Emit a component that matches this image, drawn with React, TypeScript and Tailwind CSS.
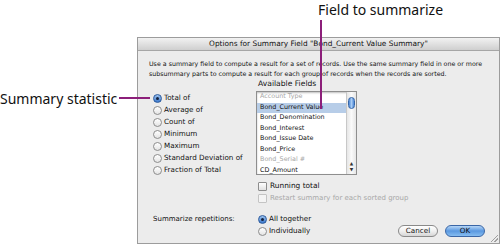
const statistics = [
  'Total of',
  'Average of',
  'Count of',
  'Minimum',
  'Maximum',
  'Standard Deviation of',
  'Fraction of Total',
];

const fields = [
  { name: 'Account Type', disabled: true },
  { name: 'Bond_Current Value', selected: true },
  { name: 'Bond_Denomination' },
  { name: 'Bond_Interest' },
  { name: 'Bond_Issue Date' },
  { name: 'Bond_Price' },
  { name: 'Bond_Serial #', disabled: true },
  { name: 'CD_Amount' },
];

function Radio({ on }: { on?: boolean }) {
  if (on) {
    return (
      <span className="w-[9px] h-[9px] rounded-full border border-[#2c5a9c] bg-gradient-to-b from-[#9cc3ee] to-[#3b78cc] flex items-center justify-center shrink-0">
        <span className="w-[3px] h-[3px] rounded-full bg-[#14213d]" />
      </span>
    );
  }
  return <span className="w-[9px] h-[9px] rounded-full border border-[#8d8d8d] bg-gradient-to-b from-[#ffffff] to-[#e4e4e4] shrink-0" />;
}

function Checkbox({ disabled }: { disabled?: boolean }) {
  return (
    <span
      className={
        disabled
          ? 'w-[9px] h-[9px] rounded-[1px] border border-[#c4c4c4] bg-[#f4f4f4] shrink-0'
          : 'w-[9px] h-[9px] rounded-[1px] border border-[#8d8d8d] bg-gradient-to-b from-[#ffffff] to-[#e2e2e2] shrink-0'
      }
    />
  );
}

function FieldRow({ name, disabled, selected }: { name: string; disabled?: boolean; selected?: boolean }) {
  let cls = 'h-[10.5px] shrink-0 pl-[3px] flex items-center text-[6.4px] text-[#111111]';
  if (selected) cls = 'h-[10.5px] shrink-0 pl-[3px] flex items-center text-[6.4px] text-[#111111] bg-[#b7cde8]';
  if (disabled) cls = 'h-[10.5px] shrink-0 pl-[3px] flex items-center text-[6.4px] text-[#a6a6a6]';
  return <div className={cls}>{name}</div>;
}

export default function App() {
  return (
    <div className="relative w-[500px] h-[249px] bg-white overflow-hidden font-['DejaVu_Sans',sans-serif] text-[#111111]">
      {/* callouts */}
      <div className="absolute left-0 top-[88px] h-[20px] flex items-center font-['Noto_Sans',sans-serif] text-[14px] text-[#111]">
        Summary statistic
      </div>
      <div className="absolute left-[119px] top-[97px] w-[31px] h-[2px] bg-[#8c1f7a] z-10" />
      <div className="absolute left-[318px] top-0 h-[18px] flex items-center font-['Noto_Sans',sans-serif] text-[14px] text-[#111]">
        Field to summarize
      </div>
      <div className="absolute left-[320px] top-[20px] w-[2px] h-[89px] bg-[#8c1f7a] z-10" />

      <div className="pt-[37px] pl-[137px]">
        <div className="relative w-[363px] h-[207px] border border-[#9c9c9c] bg-[#ececec] flex flex-col">
          <div className="h-[13px] border-b border-[#a6a6a6] bg-gradient-to-b from-[#f2f2f2] to-[#cfcfcf] text-[7.4px] leading-[12px] text-center">
            Options for Summary Field "Bond_Current Value Summary"
          </div>

          <p className="mt-[8px] px-[11px] text-[6.3px] leading-[10px]">
            Use a summary field to compute a result for a set of records. Use the same summary field in one or more subsummary parts to compute a result for each group of records when the records are sorted.
          </p>

          <div className="flex">
            <div className="w-[118px] pl-[15px] pt-[13px] flex flex-col">
              {statistics.map((s, i) => (
                <div key={s} className="h-[12px] flex items-center gap-[2px] text-[7.2px]">
                  <Radio on={i === 0} />
                  <span>{s}</span>
                </div>
              ))}
            </div>

            <div className="flex flex-col">
              <div className="h-[10px] pl-[2px] flex items-center text-[7.6px]">Available Fields</div>
              <div className="mt-[2px] w-[101px] h-[84px] border border-[#8e8e8e] bg-white flex overflow-hidden shadow-[inset_0_1px_2px_rgba(0,0,0,0.25)]">
                <div className="flex-1 flex flex-col">
                  {fields.map((f) => (
                    <FieldRow key={f.name} name={f.name} disabled={f.disabled} selected={f.selected} />
                  ))}
                </div>
                <div className="w-[10px] border-l border-[#c8c8c8] bg-gradient-to-r from-[#e6e6e6] via-[#fafafa] to-[#e6e6e6] flex flex-col items-center">
                  <div className="mt-[5px] w-[7px] h-[12px] rounded-full border border-[#3566a8] bg-gradient-to-r from-[#4c86d4] via-[#a9cdf4] to-[#4c86d4]" />
                  <div className="flex-1" />
                  <div className="text-[4.5px] leading-[6px] text-[#333]">▲</div>
                  <div className="text-[4.5px] leading-[6px] text-[#333] mb-[1px]">▼</div>
                </div>
              </div>
              <div className="mt-[5px] h-[12px] pl-[2px] flex items-center gap-[3px] text-[7.4px]">
                <Checkbox />
                <span>Running total</span>
              </div>
              <div className="h-[12px] pl-[2px] flex items-center gap-[3px] text-[7px] text-[#a8a8a8]">
                <Checkbox disabled />
                <span>Restart summary for each sorted group</span>
              </div>
            </div>
          </div>

          <div className="mt-[9px] flex items-start">
            <div className="w-[118px] pl-[15px] h-[12px] flex items-center text-[7px]">Summarize repetitions:</div>
            <div className="flex flex-col pl-[2px]">
              <div className="h-[12px] flex items-center gap-[2px] text-[7.2px]">
                <Radio on />
                <span>All together</span>
              </div>
              <div className="h-[12px] flex items-center gap-[2px] text-[7.2px]">
                <Radio />
                <span>Individually</span>
              </div>
            </div>
            <div className="ml-auto mt-[12px] mr-[14px] flex gap-[7px]">
              <button className="w-[40px] h-[12px] rounded-full border border-[#8a8a8a] bg-gradient-to-b from-[#ffffff] via-[#f0f0f0] to-[#d6d6d6] text-[7.2px] leading-[10px]">
                Cancel
              </button>
              <button className="w-[40px] h-[12px] rounded-full border border-[#3a66a6] bg-gradient-to-b from-[#b6d6f6] via-[#5a98e0] to-[#86bdf0] text-[7.2px] leading-[10px]">
                OK
              </button>
            </div>
          </div>

          <div className="absolute right-[1px] bottom-[1px] w-[7px] h-[7px] bg-[linear-gradient(135deg,transparent_45%,#a0a0a0_45%,#a0a0a0_55%,transparent_55%,transparent_70%,#a0a0a0_70%,#a0a0a0_80%,transparent_80%)]" />
        </div>
      </div>
    </div>
  );
}
